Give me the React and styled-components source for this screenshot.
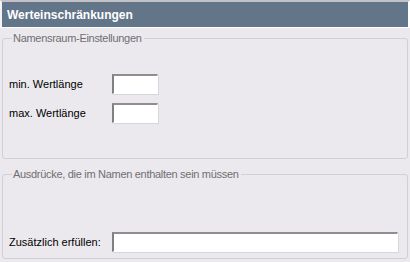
import React from "react";
import styled, { createGlobalStyle } from "styled-components";

const GlobalStyle = createGlobalStyle`
  html, body {
    margin: 0;
    padding: 0;
    background: #ebe9ed;
  }
  #root {
    width: 410px;
    height: 262px;
  }
`;

const Page = styled.div`
  width: 410px;
  height: 262px;
  box-sizing: border-box;
  background: #ebe9ed;
  font-family: "Liberation Sans", Arial, sans-serif;
  font-size: 11px;
  color: #000000;
  display: flex;
  flex-direction: column;
  overflow: hidden;
`;

const Header = styled.div`
  height: 28px;
  box-sizing: border-box;
  border-top: 2px solid #c2c1c6;
  border-left: 2px solid #f4f3f6;
  border-right: 2px solid #ffffff;
  border-bottom: 1px solid #ffffff;
  background: #627589;
  color: #ffffff;
  font-weight: bold;
  font-size: 12px;
  padding-left: 5px;
  display: flex;
  align-items: center;
`;

const Group = styled.fieldset`
  margin: ${(p) => p.$top}px 2px 0 2px;
  padding: ${(p) => p.$padTop}px 6px ${(p) => p.$padBottom}px 6px;
  border: 1px solid #d0cfd4;
  border-radius: 3px;
  min-width: 0;
  display: flex;
  flex-direction: column;
  gap: 9px;
`;

const Caption = styled.legend`
  margin-left: 3px;
  padding: 0 2px 0 1px;
  color: #6f6f72;
  font-size: 11px;
  letter-spacing: -0.3px;
  line-height: 14px;
`;

const Row = styled.div`
  display: flex;
  align-items: center;
`;

const Label = styled.label`
  width: 103px;
  flex-shrink: 0;
  font-size: 11px;
`;

const Field = styled.input`
  box-sizing: border-box;
  width: ${(p) => p.$width}px;
  height: 20px;
  margin: 0;
  padding: 0 3px;
  background: #ffffff;
  border-style: solid;
  border-width: 2px 1px 1px 2px;
  border-color: #8e8e92 #ffffff #ffffff #808084;
  box-shadow: 1px 1px 0 #d8d6dc;
  outline: none;
  font-family: inherit;
  font-size: 11px;
`;

export default function App() {
  return (
    <>
      <GlobalStyle />
      <Page>
        <Header>Werteinschränkungen</Header>
        <Group $top={3} $padTop={29} $padBottom={35}>
          <Caption>Namensraum-Einstellungen</Caption>
          <Row>
            <Label>min. Wertlänge</Label>
            <Field $width={46} />
          </Row>
          <Row>
            <Label>max. Wertlänge</Label>
            <Field $width={46} />
          </Row>
        </Group>
        <Group $top={8} $padTop={51} $padBottom={6}>
          <Caption>Ausdrücke, die im Namen enthalten sein müssen</Caption>
          <Row>
            <Label>Zusätzlich erfüllen:</Label>
            <Field $width={286} />
          </Row>
        </Group>
      </Page>
    </>
  );
}
